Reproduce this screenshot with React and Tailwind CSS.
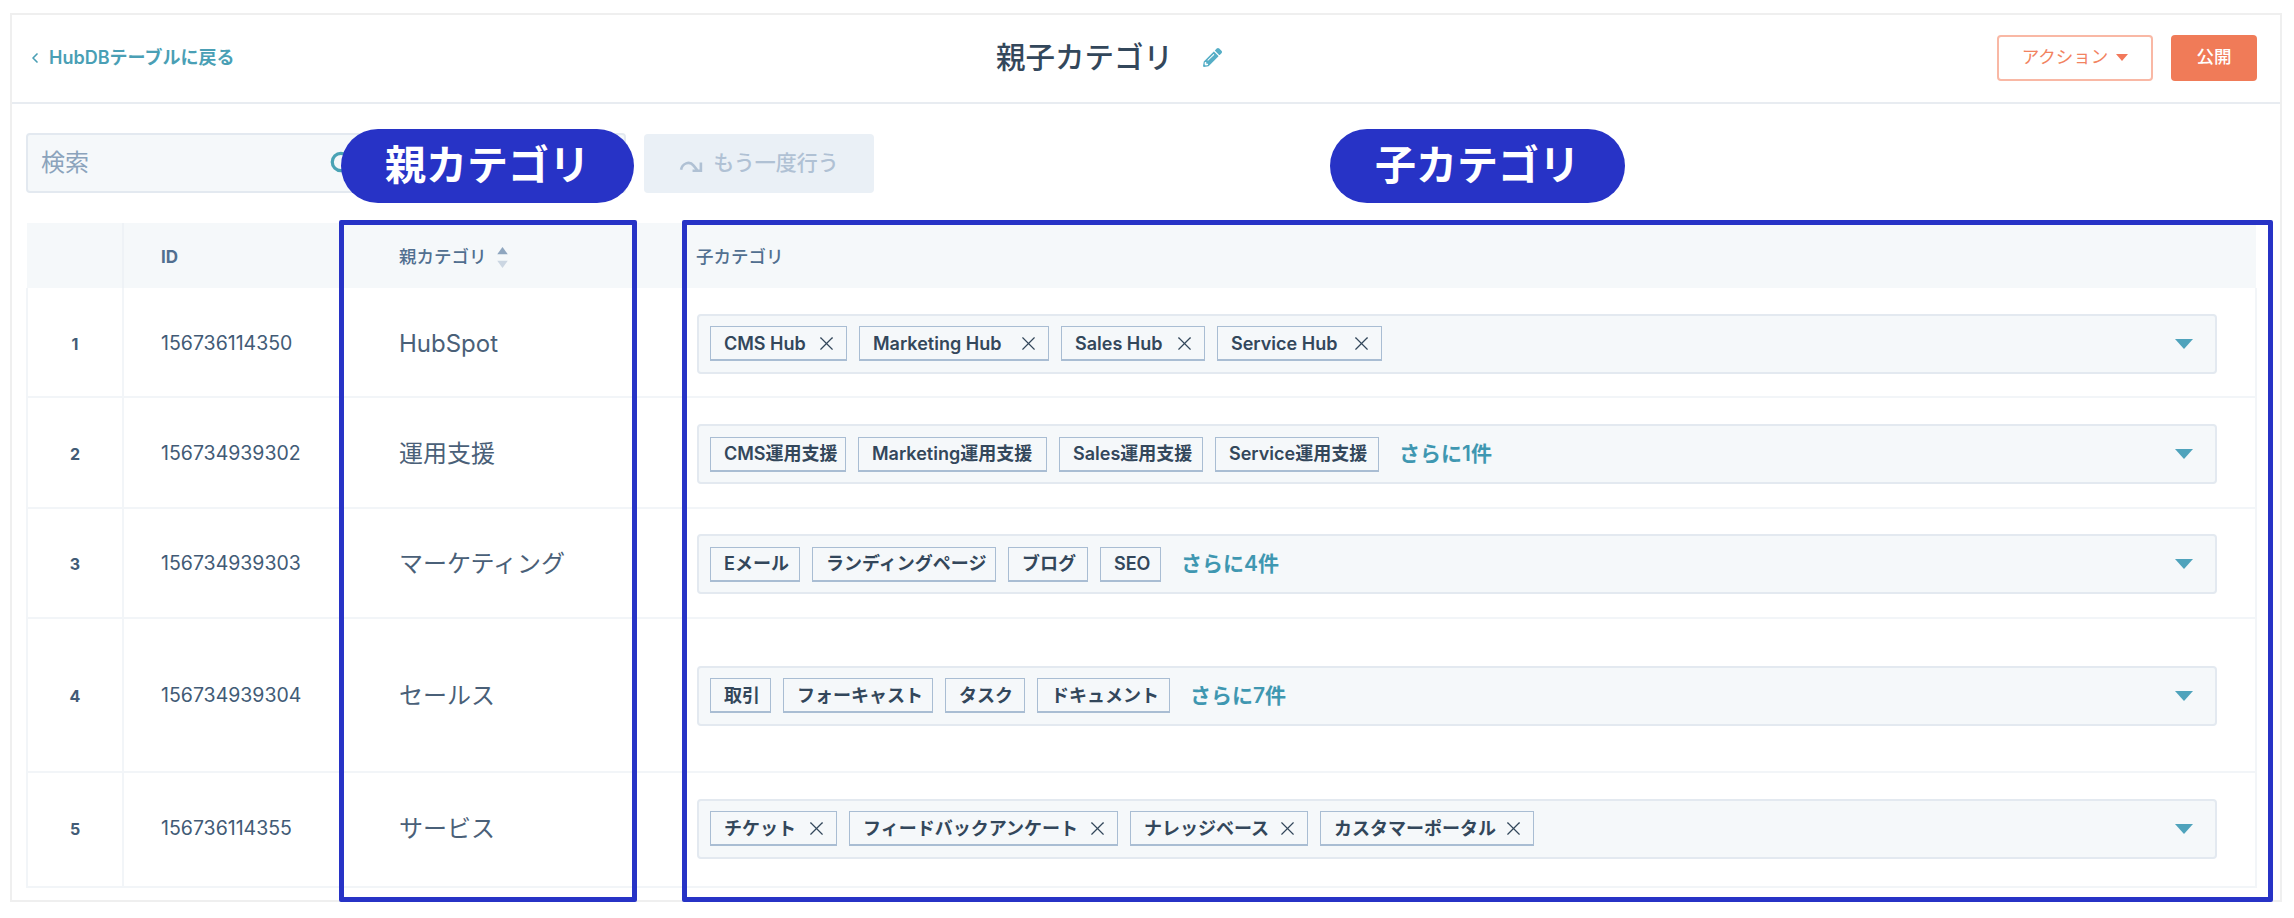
import { ChevronLeft, Search, X } from "lucide-react";
import { FaPencilAlt } from "react-icons/fa";

const FONT = "font-['Inter','Noto_Sans_CJK_JP',sans-serif]";

const ROWS = [
  {
    num: 1,
    id: "156736114350",
    name: "HubSpot",
    h: "h-[109px]",
    pad: "pt-[3px]",
    tags: [
      { label: "CMS Hub", w: "w-[137px]", x: true },
      { label: "Marketing Hub", w: "w-[190px]", x: true },
      { label: "Sales Hub", w: "w-[144px]", x: true },
      { label: "Service Hub", w: "w-[165px]", x: true },
    ],
  },
  {
    num: 2,
    id: "156734939302",
    name: "運用支援",
    h: "h-[111px]",
    pad: "pt-[3px]",
    tags: [
      { label: "CMS運用支援", w: "w-[136px]" },
      { label: "Marketing運用支援", w: "w-[189px]" },
      { label: "Sales運用支援", w: "w-[144px]" },
      { label: "Service運用支援", w: "w-[164px]" },
    ],
    more: "さらに1件",
  },
  {
    num: 3,
    id: "156734939303",
    name: "マーケティング",
    h: "h-[110px]",
    pad: "pt-[2px]",
    tags: [
      { label: "Eメール", w: "w-[90px]" },
      { label: "ランディングページ", w: "w-[184px]" },
      { label: "ブログ", w: "w-[80px]" },
      { label: "SEO", w: "w-[61px]" },
    ],
    more: "さらに4件",
  },
  {
    num: 4,
    id: "156734939304",
    name: "セールス",
    h: "h-[154px]",
    pad: "pt-[1px]",
    tags: [
      { label: "取引", w: "w-[61px]" },
      { label: "フォーキャスト", w: "w-[150px]" },
      { label: "タスク", w: "w-[80px]" },
      { label: "ドキュメント", w: "w-[133px]" },
    ],
    more: "さらに7件",
  },
  {
    num: 5,
    id: "156736114355",
    name: "サービス",
    h: "h-[115px]",
    pad: "pb-[2px]",
    tags: [
      { label: "チケット", w: "w-[127px]", x: true },
      { label: "フィードバックアンケート", w: "w-[269px]", x: true },
      { label: "ナレッジベース", w: "w-[178px]", x: true },
      { label: "カスタマーポータル", w: "w-[214px]", x: true },
    ],
  },
];

function Tag({ label, w, x }) {
  return (
    <span
      className={`${w} h-[35px] flex items-center justify-between pl-[13px] ${x ? "pr-[8px]" : "pr-[10px]"} bg-[#f5f8fa] border border-[#a9bdd3] border-b-2 text-[18px] font-semibold text-[#33475b] whitespace-nowrap`}
    >
      {label}
      {x && <X size={23} strokeWidth={1.2} className="shrink-0" />}
    </span>
  );
}

function TagSelect({ tags, more }) {
  return (
    <div className="h-[60px] flex items-center pl-[11px] pr-[22px] bg-[#f5f8fa] border-2 border-[#e3e9f0] rounded-[4px]">
      <div className="flex items-center gap-[12px]">
        {tags.map((t) => (
          <Tag key={t.label} {...t} />
        ))}
      </div>
      {more && <span className="ml-[20px] text-[21px] font-semibold text-[#3f97b1]">{more}</span>}
      <svg viewBox="0 0 18 10" className="ml-auto w-[18px] h-[10px] fill-[#4fa3bc]">
        <path d="M0 0h18l-9 10z" />
      </svg>
    </div>
  );
}

// annotation frames and pills drawn on top of the table
function Callout({ label, pill, box }) {
  return (
    <>
      <div className={`absolute ${pill} top-[114px] h-[74px] rounded-full bg-[#2733c6] flex items-center justify-center text-white text-[41px] font-semibold`}>
        {label}
      </div>
      <div className={`absolute ${box} top-[205px] h-[682px] border-[5px] border-[#2733c6] rounded-[2px]`} />
    </>
  );
}

export default function App() {
  return (
    <div className={`${FONT} w-[2294px] h-[918px] bg-white overflow-hidden pt-[13px] pl-[10px]`}>
      <div className="relative w-[2272px] h-[889px] border-2 border-[#efefef]">
        {/* top bar */}
        <header className="h-[89px] border-b-2 border-[#e8ecf1] flex items-center pr-[23px] pb-[2px]">
          <a className="w-[984px] flex items-center pl-[15px] text-[#4a9fb5] text-[18px] font-semibold">
            <ChevronLeft size={16} strokeWidth={2.5} className="mr-[6px]" />
            HubDBテーブルに戻る
          </a>
          <h1 className="w-[174px] text-[29.5px] font-medium text-[#33475b] leading-none whitespace-nowrap">親子カテゴリ</h1>
          <FaPencilAlt className="ml-[33px] text-[#55aec6] text-[19px]" />
          <div className="ml-auto flex items-center gap-[18px] text-[17.5px]">
            <button className="w-[156px] h-[46px] flex items-center justify-center gap-[8px] border-2 border-[#f9b8a5] rounded-[4px] text-[#f2835f]">
              アクション
              <svg viewBox="0 0 12 7" className="w-[12px] h-[7px] fill-[#f2785a]">
                <path d="M0 0h12l-6 7z" />
              </svg>
            </button>
            <button className="w-[86px] h-[46px] bg-[#f07b58] rounded-[4px] text-white font-medium">公開</button>
          </div>
        </header>

        {/* search + redo */}
        <div className="mt-[29px] ml-[14px] flex items-center gap-[18px]">
          <div className="w-[600px] h-[60px] flex items-center pl-[13px] bg-[#f5f8fa] border-2 border-[#e3e9f0] rounded-[4px]">
            <span className="text-[24px] text-[#8ba3bc]">検索</span>
            <Search size={26} strokeWidth={3} className="ml-[240px] text-[#4aa3b5]" />
          </div>
          <button className="w-[230px] h-[59px] flex items-center justify-center gap-[9px] bg-[#eaf0f6] rounded-[4px] text-[21px] font-medium text-[#b0c1d4]">
            <svg viewBox="0 0 24 16" className="w-[25px] h-[17px] fill-none stroke-[#b0c1d4] stroke-[2.5]">
              <path d="M2 14c1-6 8-9 12-4l4 5M21 7v8h-8" />
            </svg>
            もう一度行う
          </button>
        </div>

        {/* table */}
        <table className="mt-[30px] ml-[14px] w-[2231px] table-fixed border-collapse text-[#425b76]">
          <colgroup>
            <col className="w-[96px]" />
            <col className="w-[239px]" />
            <col className="w-[297px]" />
            <col />
          </colgroup>
          <thead>
            <tr className="h-[65px] bg-[#f5f8fa] text-left text-[#516f90]">
              <th className="border-r-2 border-[#eef2f6]" />
              <th className="pl-[37px] pt-[4px] text-[17px] font-bold">ID</th>
              <th className="pl-[37px] pt-[4px] text-[17.5px] font-medium">
                <span className="flex items-center gap-[10px]">
                  親カテゴリ
                  <svg viewBox="0 0 10 20" className="w-[11px] h-[21px]">
                    <path d="M5 0l5 7H0z" className="fill-[#8fa6bf]" />
                    <path d="M5 20l5-7H0z" className="fill-[#cbd6e2]" />
                  </svg>
                </span>
              </th>
              <th className="pl-[37px] pt-[4px] text-[17.5px] font-medium">子カテゴリ</th>
            </tr>
          </thead>
          <tbody>
            {ROWS.map((r) => (
              <tr key={r.num} className={`${r.h} border-b-2 border-[#f2f5f8]`}>
                <td className={`${r.pad} text-center text-[16px] font-bold border-l-2 border-r-2 border-[#f2f5f8]`}>{r.num}</td>
                <td className={`${r.pad} pl-[37px] text-[19.5px]`}>{r.id}</td>
                <td className={`${r.pad} pl-[37px] text-[24px] text-[#4a6078]`}>{r.name}</td>
                <td className={`${r.pad} pl-[38px] pr-[38px] border-r-2 border-[#f2f5f8]`}>
                  <TagSelect tags={r.tags} more={r.more} />
                </td>
              </tr>
            ))}
          </tbody>
        </table>

        <Callout label="親カテゴリ" pill="left-[329px] w-[293px]" box="left-[327px] w-[298px]" />
        <Callout label="子カテゴリ" pill="left-[1318px] w-[295px]" box="left-[670px] w-[1591px]" />
      </div>
    </div>
  );
}
